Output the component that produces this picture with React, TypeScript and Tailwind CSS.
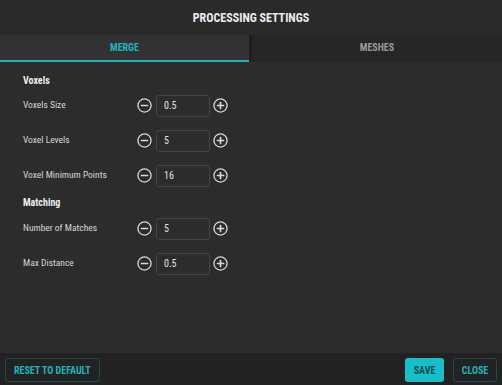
import React, { useState, type JSX } from 'react'

interface SettingRowProps
{
    label: string;
    value: string;
}

const CircleIcon = ({ plus }: { plus?: boolean }): JSX.Element =>
{
    return (
        <svg width="15" height="15" viewBox="0 0 16 16" fill="none" stroke="#d8d8d8" strokeWidth="1.4" strokeLinecap="round">
            <circle cx="8" cy="8" r="7" />
            <line x1="4.8" y1="8" x2="11.2" y2="8" strokeWidth="1.8" />
            {plus && <line x1="8" y1="4.8" x2="8" y2="11.2" strokeWidth="1.8" />}
        </svg>
    )
}

const SettingRow = ({ label, value }: SettingRowProps): JSX.Element =>
{
    return (
        <div className="flex items-center h-[35px]">
            <div className="w-[113px] text-[9.5px] text-[#d6d6d6]">{label}</div>
            <button className="flex items-center justify-center w-[16px] h-[16px]">
                <CircleIcon />
            </button>
            <div className="ml-[4px] w-[54px] h-[22px] border border-[#454545] rounded-[3px] flex items-center px-[7px] text-[10px] text-[#e2e2e2]">
                {value}
            </div>
            <button className="ml-[2px] flex items-center justify-center w-[16px] h-[16px]">
                <CircleIcon plus />
            </button>
        </div>
    )
}

const App: React.FC = (): JSX.Element =>
{
    const [tab, setTab] = useState<"merge" | "meshes">("merge");

    return (
        <div className="w-[502px] h-[385px] flex flex-col bg-[#2c2c2c] overflow-hidden" style={{ fontFamily: '"Liberation Sans Narrow", "Roboto Condensed", Roboto, sans-serif' }}>

            {/* Header */}
            <div className="h-[35px] shrink-0 flex items-center justify-center bg-[#2a2a2a]">
                <span className="text-[12px] font-bold text-[#ececec]">PROCESSING SETTINGS</span>
            </div>

            {/* Tabs */}
            <div className="h-[27px] shrink-0 flex">
                <button
                    onClick={() => setTab("merge")}
                    className={"w-[249px] flex items-center justify-center text-[10px] font-bold border-b-2 " + (tab === "merge" ? "bg-[#323232] text-[#1fb3be] border-[#1fb3be]" : "bg-[#262626] text-[#9a9a9a] border-transparent")}
                >
                    MERGE
                </button>
                <div className="w-[3px] bg-[#1e1e1e]" />
                <button
                    onClick={() => setTab("meshes")}
                    className={"grow flex items-center justify-center text-[10px] font-bold border-b-2 " + (tab === "meshes" ? "bg-[#323232] text-[#1fb3be] border-[#1fb3be]" : "bg-[#262626] text-[#9a9a9a] border-transparent")}
                >
                    MESHES
                </button>
            </div>

            {/* Content */}
            <div className="grow flex flex-col px-[23px] pt-[10px]">
                <div className="h-[16px] flex items-center text-[10px] font-bold text-[#ececec]">Voxels</div>
                <SettingRow label="Voxels Size" value="0.5" />
                <SettingRow label="Voxel Levels" value="5" />
                <SettingRow label="Voxel Minimum Points" value="16" />
                <div className="h-[18px] flex items-center text-[10px] font-bold text-[#ececec]">Matching</div>
                <SettingRow label="Number of Matches" value="5" />
                <SettingRow label="Max Distance" value="0.5" />
            </div>

            {/* Footer */}
            <div className="h-[32px] shrink-0 flex items-center px-[5px] pt-[2px] bg-[#222222]">
                <button className="h-[24px] px-[8px] border border-[#1d4a4c] rounded-[3px] text-[10px] font-bold text-[#1fb3be]">
                    RESET TO DEFAULT
                </button>
                <div className="grow" />
                <button className="h-[24px] w-[39px] rounded-[3px] bg-[#17bfcb] text-[10px] font-bold text-[#124b50]">
                    SAVE
                </button>
                <button className="ml-[9px] h-[24px] w-[44px] border border-[#1d4a4c] rounded-[3px] text-[10px] font-bold text-[#1fb3be]">
                    CLOSE
                </button>
            </div>
        </div>
    )
}

export default App
